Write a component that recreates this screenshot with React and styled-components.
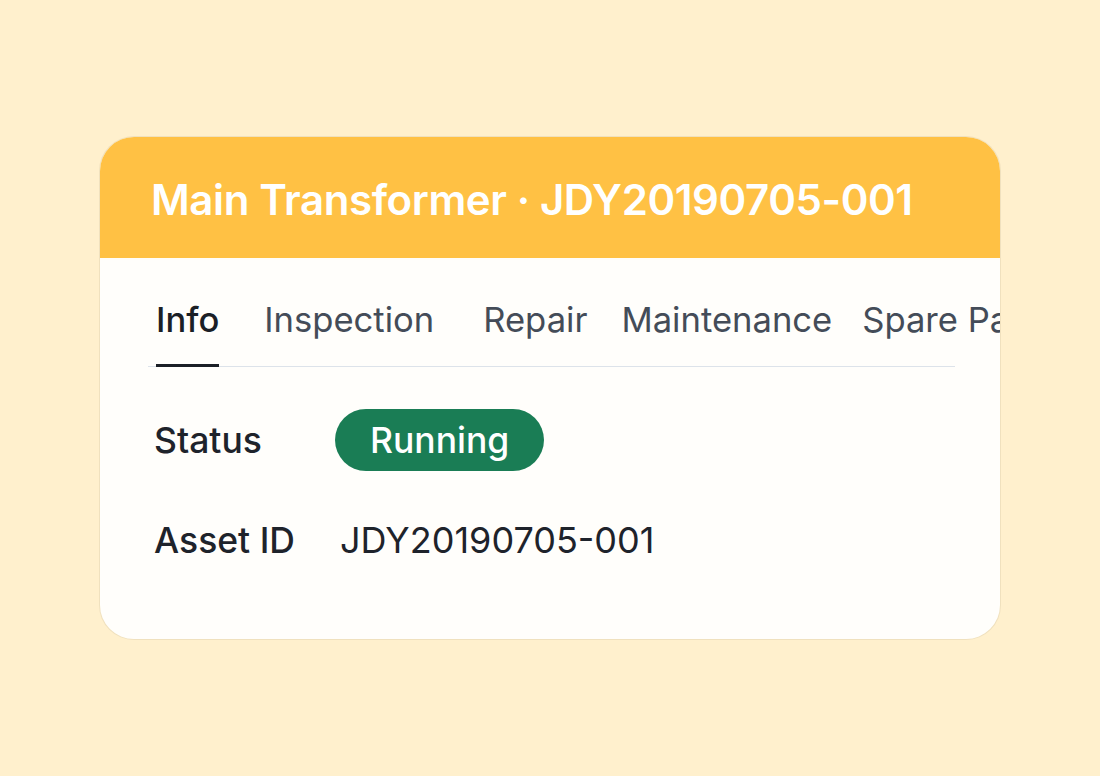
import styled, { createGlobalStyle } from 'styled-components'

const GlobalStyle = createGlobalStyle`
  html, body {
    margin: 0;
    padding: 0;
    background: #fff0cd;
    font-family: Inter, "Noto Sans", sans-serif;
  }
`

const Page = styled.div`
  width: 1100px;
  height: 776px;
  display: flex;
  justify-content: center;
  padding-top: 137px;
  box-sizing: border-box;
`

const Card = styled.div`
  width: 900px;
  height: 502px;
  background: #fffefb;
  border-radius: 34px;
  overflow: hidden;
  box-shadow: 0 0 0 1px rgba(230, 215, 180, 0.6);
  display: flex;
  flex-direction: column;
`

const Header = styled.div`
  height: 121px;
  background: #ffc144;
  display: flex;
  align-items: center;
  padding-left: 51px;
  padding-top: 4px;
  box-sizing: border-box;
`

const Title = styled.h1`
  margin: 0;
  color: #fff;
  font-size: 42px;
  font-weight: 600;
  letter-spacing: -0.4px;
  white-space: nowrap;
`

const Body = styled.div`
  padding: 0 45px 0 48px;
`

const TabBar = styled.div`
  display: flex;
  border-bottom: 1.5px solid #dde3ea;
  margin-top: 40px;
  white-space: nowrap;
`

const Tab = styled.div`
  flex: none;
  font-size: 34.6px;
  color: ${props => (props.active ? '#1b1f26' : '#444c58')};
  font-weight: ${props => (props.active ? 500 : 400)};
  padding: 0 0 26px;
  margin-left: ${props => props.ml}px;
  position: relative;
  &::after {
    content: '';
    display: ${props => (props.active ? 'block' : 'none')};
    position: absolute;
    left: 0;
    right: 0;
    bottom: -1px;
    height: 3px;
    background: #1b1f26;
  }
`

const Row = styled.div`
  display: flex;
  align-items: center;
  height: 62px;
  margin-top: ${props => props.mt}px;
  padding-left: 6px;
`

const Label = styled.div`
  width: ${props => props.w}px;
  font-size: 35.5px;
  color: #1e232b;
  font-weight: 500;
`

const Pill = styled.div`
  height: 62px;
  padding: 0 35px;
  border-radius: 31px;
  background: #1a7d55;
  color: #fff;
  font-size: 35.5px;
  font-weight: 500;
  display: flex;
  align-items: center;
`

const Value = styled.div`
  font-size: 36px;
  color: #1e232b;
`

const tabs = [
  { name: 'Info', ml: 8, active: true },
  { name: 'Inspection', ml: 45 },
  { name: 'Repair', ml: 49 },
  { name: 'Maintenance', ml: 34 },
  { name: 'Spare Parts', ml: 30 },
]

export default function App() {
  return (
    <>
      <GlobalStyle />
      <Page>
        <Card>
          <Header>
            <Title>Main Transformer · JDY20190705-001</Title>
          </Header>
          <Body>
            <TabBar>
              {tabs.map(t => (
                <Tab key={t.name} active={t.active} ml={t.ml}>
                  {t.name}
                </Tab>
              ))}
            </TabBar>
            <Row mt={42}>
              <Label w={181}>Status</Label>
              <Pill>Running</Pill>
            </Row>
            <Row mt={38}>
              <Label w={186}>Asset ID</Label>
              <Value>JDY20190705-001</Value>
            </Row>
          </Body>
        </Card>
      </Page>
    </>
  )
}
